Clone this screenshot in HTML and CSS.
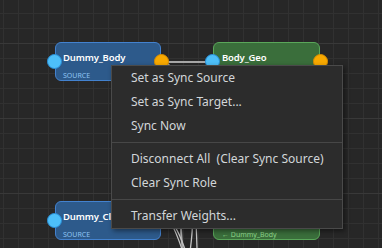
FILE: index.html
```html
<!DOCTYPE html>
<html>
<head>
<meta charset="utf-8">
<link rel="stylesheet" href="styles.css">
</head>
<body>
<div class="canvas">
  <svg class="wires" width="382" height="248" viewBox="0 0 382 248">
    <path class="wire" d="M161 62 L213 62"/>
    <path class="wire" d="M161 62 C 200 62, 170 230, 186 260"/>
    <path class="wire thin" d="M161 221 C 175 221, 178 230, 186 252"/>
    <path class="wire thin" d="M161 221 C 172 221, 174 226, 183 252"/>
    <path class="wire thin" d="M190 200 C 194 225, 192 235, 190 252"/>
    <path class="wire thin" d="M194 200 C 197 225, 197 235, 197 252"/>
  </svg>

  <div class="node node-blue n1">
    <div class="node-title">Dummy_Body</div>
    <div class="node-sub">SOURCE</div>
    <span class="port port-in"></span>
    <span class="port port-out"></span>
  </div>

  <div class="node node-green n2">
    <div class="node-title">Body_Geo</div>
    <div class="node-sub sub-green">← Dummy_Body</div>
    <span class="port port-in"></span>
    <span class="port port-out"></span>
  </div>

  <div class="node node-blue n3">
    <div class="node-title">Dummy_Cloth</div>
    <div class="node-sub">SOURCE</div>
    <span class="port port-in"></span>
    <span class="port port-out"></span>
  </div>

  <div class="node node-green n4">
    <div class="node-title">Cloth_Geo</div>
    <div class="node-sub sub-green">← Dummy_Body</div>
    <span class="port port-in"></span>
    <span class="port port-out"></span>
  </div>

  <ul class="menu">
    <li class="item">Set as Sync Source</li>
    <li class="item">Set as Sync Target...</li>
    <li class="item">Sync Now</li>
    <li class="sep"></li>
    <li class="item">Disconnect All  (Clear Sync Source)</li>
    <li class="item">Clear Sync Role</li>
    <li class="sep"></li>
    <li class="item">Transfer Weights...</li>
  </ul>
</div>
</body>
</html>
```

FILE: styles.css
```css
html, body {
  margin: 0;
  padding: 0;
}
body {
  width: 382px;
  height: 248px;
  overflow: hidden;
  background: #272727;
  font-family: "Noto Sans", "Open Sans", sans-serif;
}
.canvas {
  position: relative;
  width: 382px;
  height: 248px;
  overflow: hidden;
  background-color: #272727;
  background-image:
    linear-gradient(#393939 1px, transparent 1px),
    linear-gradient(#313131 1px, transparent 1px),
    linear-gradient(90deg, #313131 1px, transparent 1px);
  background-size: 75px 75px, 15px 15px, 15px 15px;
  background-position: 0 43px, 0 13px, 3px 0;
}
.wires {
  position: absolute;
  left: 0;
  top: 0;
}
.wire {
  fill: none;
  stroke: #a8a8a8;
  stroke-width: 2;
}
.wire.thin {
  stroke: #c4c4c4;
  stroke-width: 1.3;
}
.node {
  position: absolute;
  width: 106px;
  height: 39px;
  box-sizing: border-box;
  border-radius: 6px;
  border: 1px solid;
  padding: 8px 0 0 7px;
}
.node-blue {
  background: #2d5a8b;
  border-color: #4382cf;
}
.node-green {
  background: #3a6e3b;
  border-color: #5aa75a;
}
.n1 { left: 55px; top: 42px; }
.n2 { left: 213px; top: 42px; width: 107px; padding-left: 8px; }
.n3 { left: 55px; top: 201px; }
.n4 { left: 213px; top: 201px; width: 107px; padding-left: 8px; }
.node-title {
  color: #ffffff;
  font-size: 9.5px;
  font-weight: 600;
  letter-spacing: -0.15px;
  line-height: 13px;
  white-space: nowrap;
}
.node-sub {
  margin-top: 7px;
  color: #8ec3f2;
  font-size: 7px;
  line-height: 9px;
  white-space: nowrap;
}
.sub-green {
  color: #8fd88c;
}
.port {
  position: absolute;
  top: 11px;
  width: 15px;
  height: 15px;
  box-sizing: border-box;
  border-radius: 50%;
}
.port-in {
  left: -9px;
  background: #4dbff9;
  border: 1.5px solid #2a8fd8;
}
.port-out {
  right: -9px;
  background: #f8a900;
  border: 1.5px solid #d98e00;
}
.menu {
  position: absolute;
  left: 111px;
  top: 65px;
  width: 232px;
  box-sizing: border-box;
  margin: 0;
  padding: 0;
  list-style: none;
  background: #2c2c2c;
  border: 1px solid #4a4a4a;
  box-shadow: 2px 2px 5px rgba(0, 0, 0, 0.45);
}
.item {
  height: 24px;
  line-height: 24px;
  padding-left: 19px;
  color: #d2d6d9;
  font-size: 12px;
  white-space: pre;
}
.sep {
  height: 1px;
  margin: 4px 0;
  background: #474747;
}
```
